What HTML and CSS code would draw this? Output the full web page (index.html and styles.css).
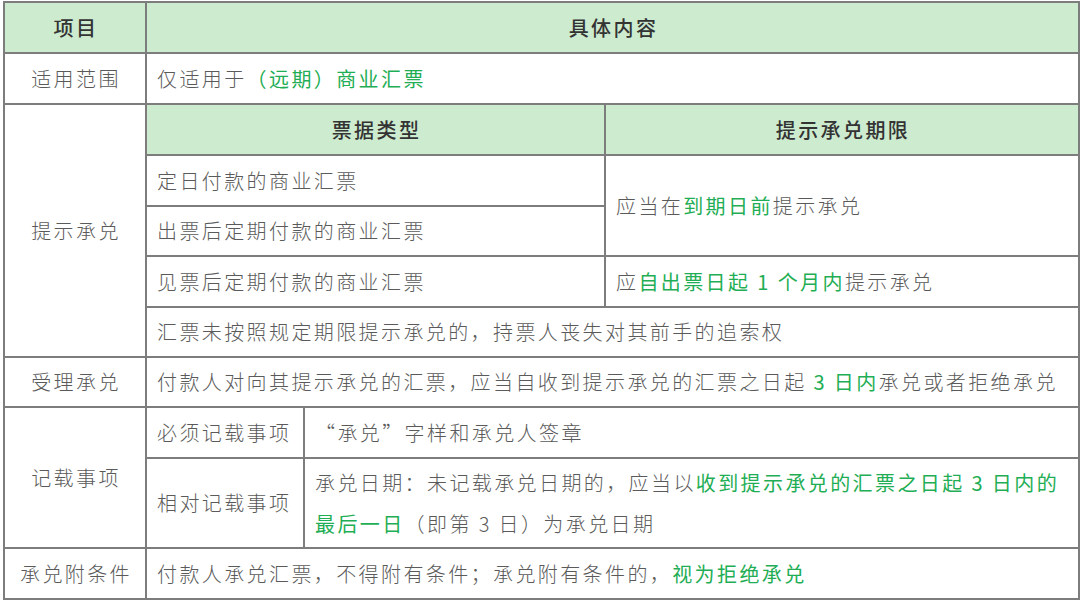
FILE: index.html
```html
<!DOCTYPE html>
<html lang="zh-CN">
<head>
<meta charset="utf-8">
<title>商业汇票承兑</title>
<link rel="stylesheet" href="styles.css">
</head>
<body>
<table class="grid">
  <colgroup>
    <col class="c1"><col class="c2"><col class="c3"><col class="c4">
  </colgroup>
  <tr class="h51">
    <th class="head center">项目</th>
    <th class="head center" colspan="3">具体内容</th>
  </tr>
  <tr class="h51">
    <td class="center">适用范围</td>
    <td colspan="3">仅适用于<span class="g">（远期）商业汇票</span></td>
  </tr>
  <tr class="h51">
    <td class="center" rowspan="5">提示承兑</td>
    <th class="head center" colspan="2">票据类型</th>
    <th class="head center">提示承兑期限</th>
  </tr>
  <tr class="h51">
    <td colspan="2">定日付款的商业汇票</td>
    <td rowspan="2">应当在<span class="g">到期日前</span>提示承兑</td>
  </tr>
  <tr class="h50">
    <td colspan="2">出票后定期付款的商业汇票</td>
  </tr>
  <tr class="h51">
    <td colspan="2">见票后定期付款的商业汇票</td>
    <td>应<span class="g">自出票日起 1 个月内</span>提示承兑</td>
  </tr>
  <tr class="h50">
    <td colspan="3">汇票未按照规定期限提示承兑的，持票人丧失对其前手的追索权</td>
  </tr>
  <tr class="h50">
    <td class="center">受理承兑</td>
    <td colspan="3">付款人对向其提示承兑的汇票，应当自收到提示承兑的汇票之日起 <span class="g">3 日内</span>承兑或者拒绝承兑</td>
  </tr>
  <tr class="h51">
    <td class="center" rowspan="2">记载事项</td>
    <td>必须记载事项</td>
    <td colspan="2">“承兑”字样和承兑人签章</td>
  </tr>
  <tr class="h90">
    <td>相对记载事项</td>
    <td colspan="2" class="two">承兑日期：未记载承兑日期的，应当以<span class="g">收到提示承兑的汇票之日起 3 日内的</span><br><span class="g">最后一日</span>（即第 3 日）为承兑日期</td>
  </tr>
  <tr class="h51">
    <td class="center">承兑附条件</td>
    <td colspan="3">付款人承兑汇票，不得附有条件；承兑附有条件的，<span class="g">视为拒绝承兑</span></td>
  </tr>
</table>
</body>
</html>
```

FILE: styles.css
```css
html, body {
  margin: 0;
  padding: 0;
  background: #ffffff;
}

body {
  padding: 1px 0 0 3px;
  font-family: "Noto Sans CJK SC", "Noto Sans", sans-serif;
}

.grid {
  border-collapse: collapse;
  table-layout: fixed;
  width: 1075px;
  border: 2px solid #3a3a3a;
}

.c1 { width: 142px; }
.c2 { width: 158px; }
.c3 { width: 301px; }
.c4 { width: 474px; }

.grid th,
.grid td {
  border: 2px solid #7d7d7d;
  padding: 0 0 0 10px;
  font-size: 20px;
  letter-spacing: 2.4px;
  color: #5a5a5a;
  font-weight: 300;
  text-align: left;
  vertical-align: middle;
  white-space: nowrap;
  line-height: 28px;
}

.grid .center {
  text-align: center;
  padding: 0 0 0 2px;
}

.grid .head {
  background: #cdebcf;
  color: #333333;
  font-weight: 500;
}

.g {
  color: #1fae55;
  font-weight: 400;
}

.h50 { height: 50px; }
.h51 { height: 51px; }
.h90 { height: 90px; }

.grid .two {
  line-height: 41px;
}
```
